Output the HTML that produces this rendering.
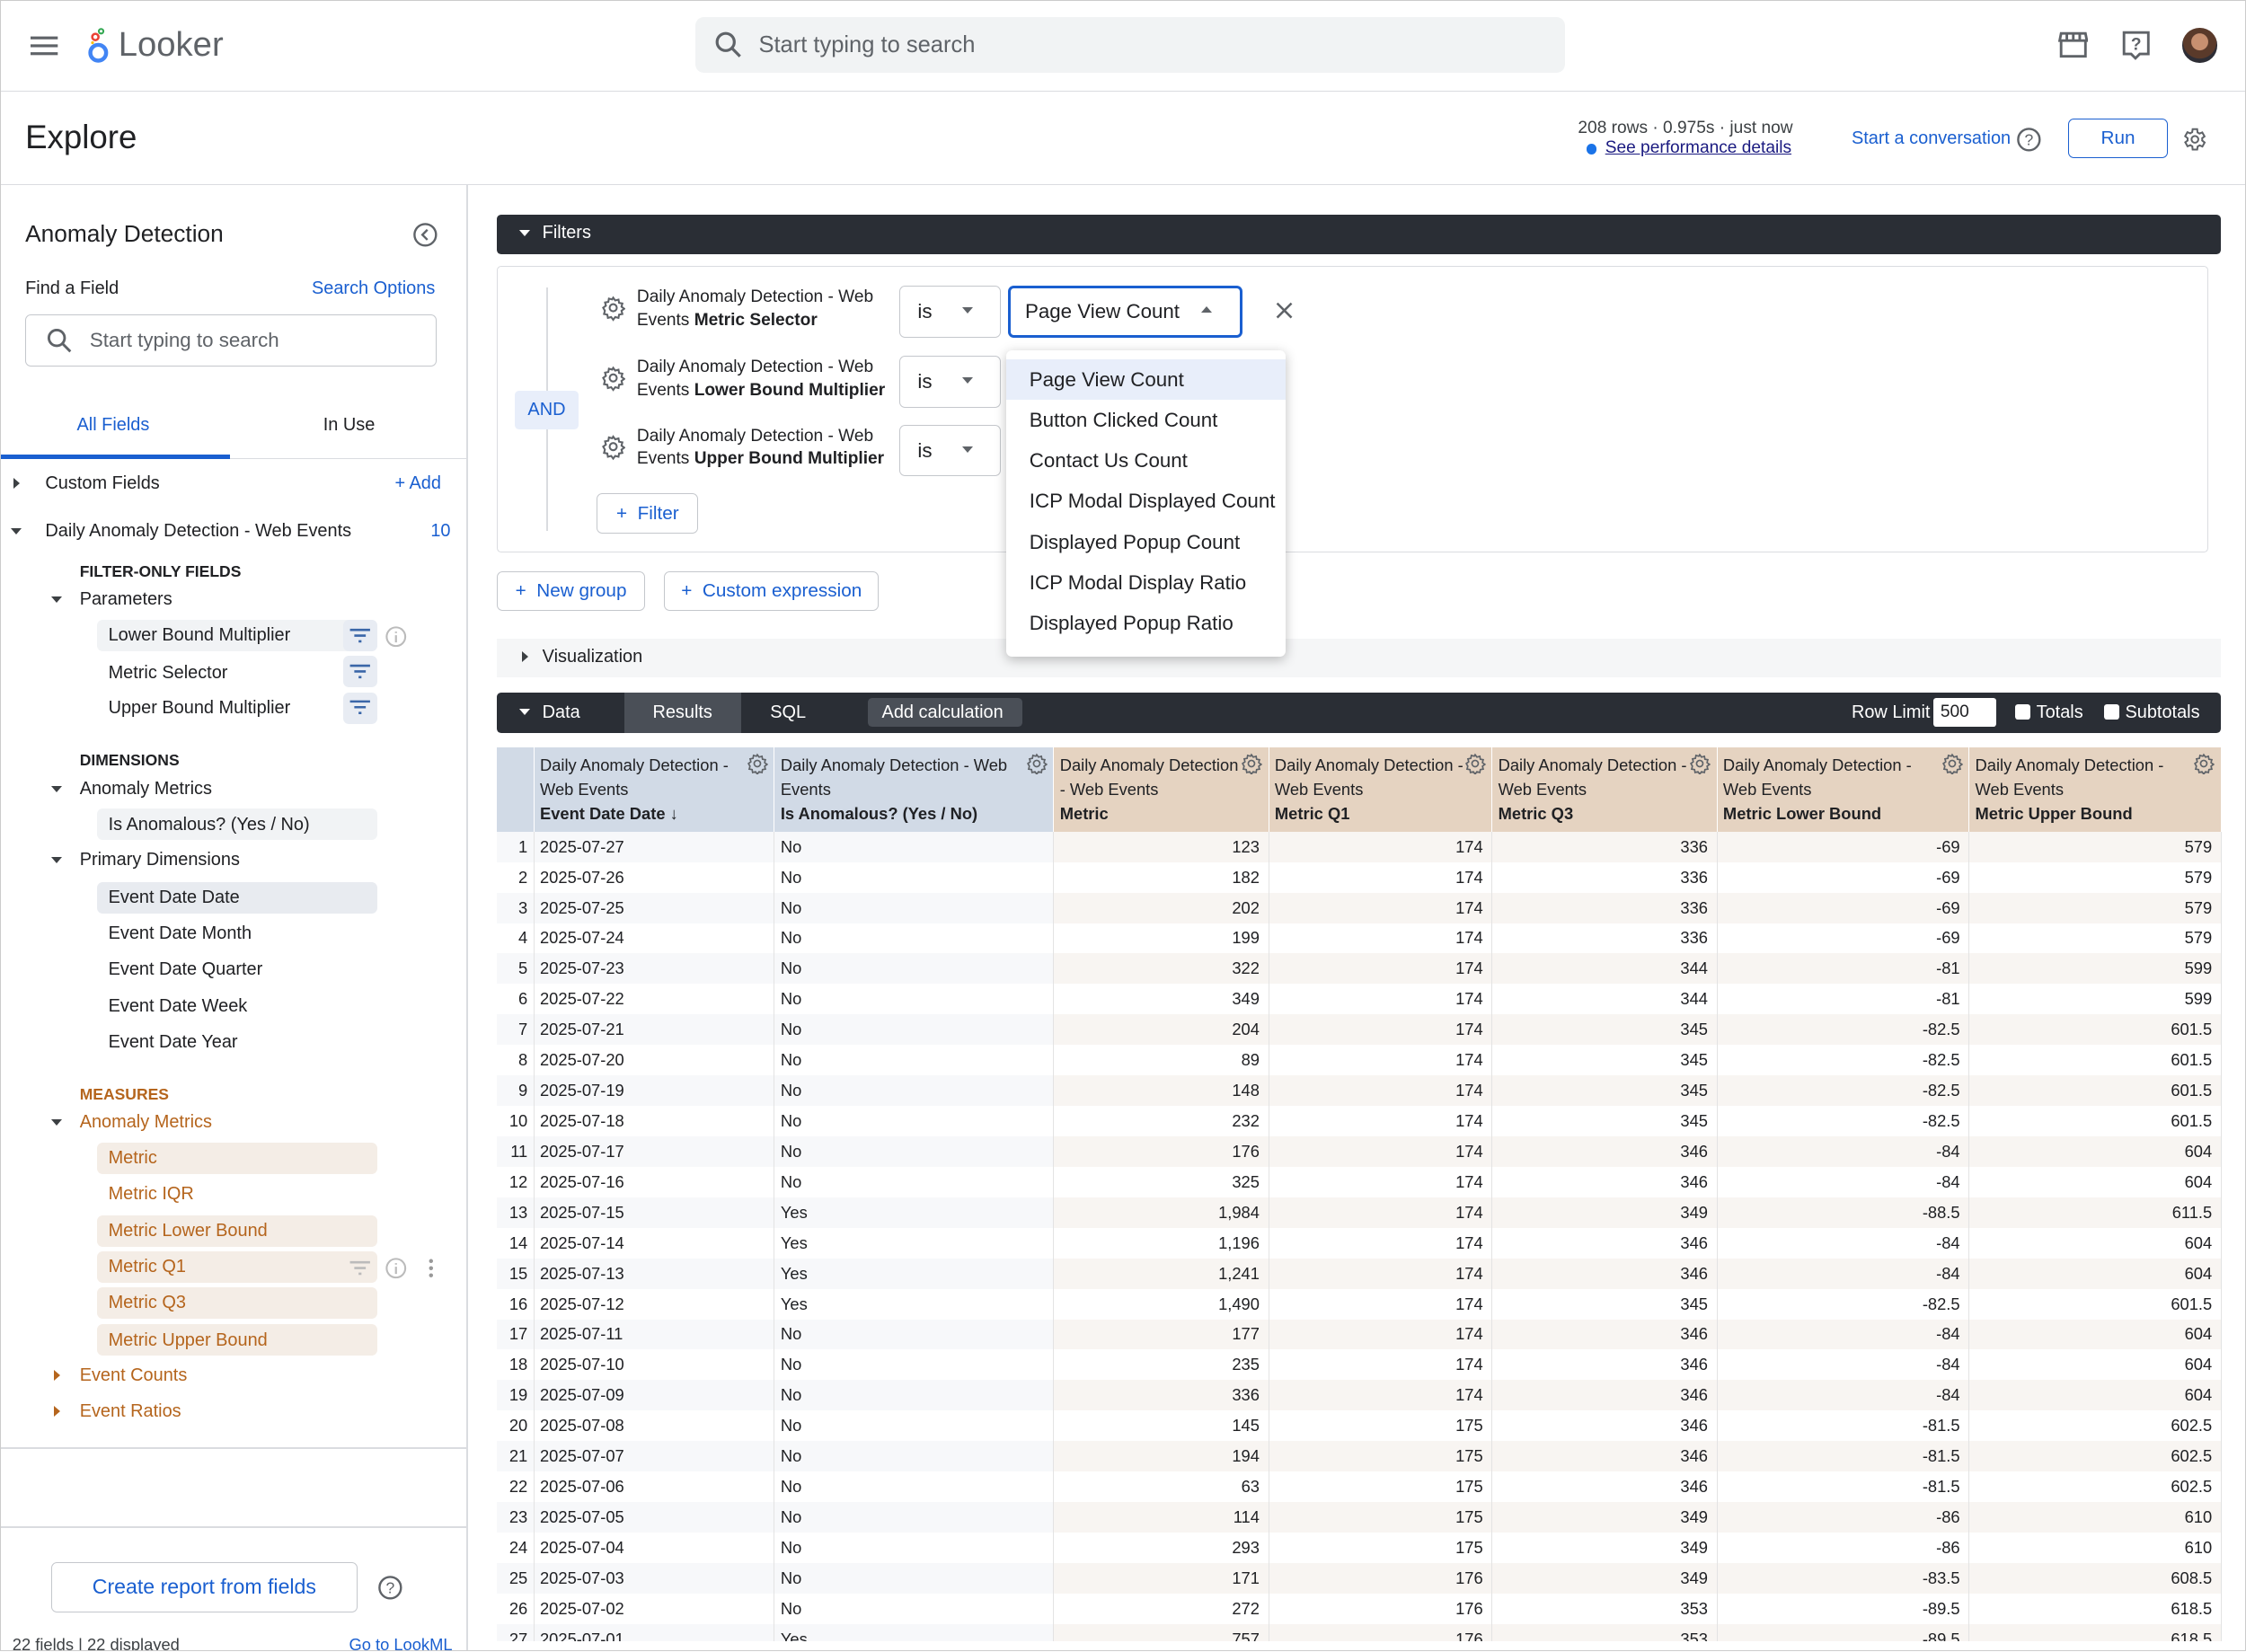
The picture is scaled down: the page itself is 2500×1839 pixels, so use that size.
<!DOCTYPE html>
<html><head><meta charset="utf-8">
<style>
html,body{margin:0;padding:0;background:#fff;overflow:hidden}
#w{zoom:1.5944;width:1568px;height:1153px;position:relative;overflow:hidden;font-family:"Liberation Sans",Arial,sans-serif;color:#202124;border:1px solid #ccc;box-sizing:border-box}
.a{position:absolute;white-space:nowrap}
.blue{color:#1a5fd0}
.sb{font-size:12.5px}
.box{position:absolute;left:67px;width:196px;height:22px;border-radius:4px}
.g{background:#f1f3f5}.b{background:#f4ede6}
.org{color:#b5651d}
.caret{position:absolute;width:0;height:0;border-left:4px solid transparent;border-right:4px solid transparent;border-top:5px solid #3c4043}
.caretr{position:absolute;width:0;height:0;border-top:4px solid transparent;border-bottom:4px solid transparent;border-left:5px solid #3c4043}
.btn{position:absolute;border:1px solid #c4c7cc;border-radius:4px;background:#fff;font-size:13px;color:#1a5fd0;box-sizing:border-box;display:flex;align-items:center;justify-content:center}
table{position:absolute;left:346px;top:521px;border-collapse:collapse;table-layout:fixed;font-size:11.5px}
th{height:56px;text-align:left;vertical-align:top;font-weight:normal;padding:4px 4px;box-sizing:border-box;line-height:17px;font-size:11.5px;position:relative;border-right:1px solid #fff}
th b{font-weight:bold}
th.d{background:#d1dae6}th.m{background:#e5d3c1}
td{height:21.28px;padding:0 4px;box-sizing:border-box;border-right:1px solid #e3e3e3;white-space:nowrap;overflow:hidden}
td.n{text-align:right;padding-right:4px}
td.r{text-align:right;padding-right:6px}
tr:nth-child(even) td.d{background:#f7f8fa}
tr:nth-child(even) td.m{background:#f8f5f2}
.gear{position:absolute;right:4px;top:4px}
.dd div{height:28.4px;line-height:28.4px;padding-left:16px;font-size:14px}
</style></head><body><div id="w">

<!-- top bar -->
<div class="a" style="left:0;top:0;width:1568px;height:63px;border-bottom:1px solid #dadce0"></div>
<svg class="a" style="left:21px;top:24px" width="20" height="15"><rect y="1" width="19" height="2" fill="#5f6368"/><rect y="6.5" width="19" height="2" fill="#5f6368"/><rect y="12" width="19" height="2" fill="#5f6368"/></svg>
<svg class="a" style="left:59px;top:18px" width="20" height="26"><circle cx="9" cy="18" r="5.5" fill="none" stroke="#4285f4" stroke-width="2.8"/><circle cx="7" cy="7" r="2.2" fill="none" stroke="#ea4335" stroke-width="1.6"/><circle cx="11" cy="3" r="1.6" fill="none" stroke="#34a853" stroke-width="1.3"/><circle cx="5" cy="11" r="1" fill="#fbbc04"/></svg>
<div class="a" style="left:82px;top:17px;font-size:24px;color:#5f6368">Looker</div>
<div class="a" style="left:485px;top:11px;width:607px;height:39px;background:#f1f3f4;border-radius:6px"></div>
<svg class="a" style="left:498px;top:21px" width="20" height="20"><circle cx="8" cy="8" r="6" fill="none" stroke="#5f6368" stroke-width="2"/><line x1="12.5" y1="12.5" x2="18" y2="18" stroke="#5f6368" stroke-width="2"/></svg>
<div class="a" style="left:529px;top:22px;font-size:16px;color:#5f6368">Start typing to search</div>
<svg class="a" style="left:1436px;top:21px" width="21" height="20"><path d="M2 2h17l1 5H1z M2 7v11h17V7 M6 2v5 M10.5 2v5 M15 2v5" fill="none" stroke="#5f6368" stroke-width="1.8"/></svg>
<svg class="a" style="left:1480px;top:20px" width="21" height="22"><path d="M2 2h17v15h-6l-3 3-3-3H2z" fill="none" stroke="#5f6368" stroke-width="1.8"/><text x="10.5" y="14" font-size="12" text-anchor="middle" fill="#5f6368" font-family="Liberation Sans" font-weight="bold">?</text></svg>
<div class="a" style="left:1523px;top:19px;width:24px;height:24px;border-radius:50%;background:radial-gradient(circle at 50% 40%,#c89070 0 30%,#5a3a2a 32% 60%,#2d2d35 62%)"></div>

<!-- explore header -->
<div class="a" style="left:0;top:63px;width:1568px;height:65px;border-bottom:1px solid #dadce0"></div>
<div class="a" style="left:17px;top:82px;font-size:23px;color:#202124">Explore</div>
<div class="a" style="left:1101px;top:82px;font-size:12px;color:#3c4043">208 rows · 0.975s · just now</div>
<div class="a" style="left:1107px;top:100px;width:7px;height:7px;border-radius:50%;background:#1a73e8"></div>
<div class="a" style="left:1120px;top:96px;font-size:12px;color:#1a1a80;text-decoration:underline">See performance details</div>
<div class="a blue" style="left:1292px;top:89px;font-size:12.5px">Start a conversation</div>
<svg class="a" style="left:1407px;top:88px" width="18" height="18"><circle cx="9" cy="9" r="7.5" fill="none" stroke="#5f6368" stroke-width="1.5"/><text x="9" y="13" font-size="11" text-anchor="middle" fill="#5f6368" font-family="Liberation Sans">?</text></svg>
<div class="btn" style="left:1443px;top:82px;width:70px;height:28px;border-color:#1a5fd0">Run</div>
<svg class="a" style="left:1522px;top:87px" width="19" height="19" viewBox="0 0 24 24"><path d="M19.4 13a7.5 7.5 0 000-2l2.1-1.6-2-3.5-2.5 1a7 7 0 00-1.7-1L15 3h-4l-.4 2.7a7 7 0 00-1.7 1l-2.5-1-2 3.5L6.6 11a7.5 7.5 0 000 2l-2.1 1.6 2 3.5 2.5-1a7 7 0 001.7 1L11 21h4l.4-2.7a7 7 0 001.7-1l2.5 1 2-3.5z" fill="none" stroke="#5f6368" stroke-width="1.6" transform="translate(-1 0)"/><circle cx="12" cy="12" r="3" fill="none" stroke="#5f6368" stroke-width="1.6"/></svg>

<!-- sidebar -->
<div class="a" style="left:325px;top:128px;width:1px;height:1025px;background:#dadce0"></div>
<div class="a" style="left:17px;top:153px;font-size:16.5px">Anomaly Detection</div>
<svg class="a" style="left:287px;top:154px" width="18" height="18"><circle cx="9" cy="9" r="7.5" fill="none" stroke="#5f6368" stroke-width="1.5"/><path d="M10.5 5.5L7 9l3.5 3.5" fill="none" stroke="#5f6368" stroke-width="1.5"/></svg>
<div class="a sb" style="left:17px;top:194px">Find a Field</div>
<div class="a sb blue" style="left:217px;top:194px">Search Options</div>
<div class="a" style="left:17px;top:219px;width:287px;height:36px;border:1px solid #c4c7cc;border-radius:4px;box-sizing:border-box"></div>
<svg class="a" style="left:32px;top:228px" width="18" height="18"><circle cx="7" cy="7" r="5.5" fill="none" stroke="#5f6368" stroke-width="1.8"/><line x1="11" y1="11" x2="16.5" y2="16.5" stroke="#5f6368" stroke-width="1.8"/></svg>
<div class="a" style="left:62px;top:229px;font-size:14px;color:#5f6368">Start typing to search</div>
<div class="a sb blue" style="left:53px;top:289px">All Fields</div>
<div class="a sb" style="left:225px;top:289px">In Use</div>
<div class="a" style="left:0;top:319px;width:325px;height:1px;background:#dadce0"></div>
<div class="a" style="left:0;top:317px;width:160px;height:3px;background:#1a5fd0"></div>
<div class="caretr" style="left:9px;top:333px"></div>
<div class="a sb" style="left:31px;top:330px">Custom Fields</div>
<div class="a sb blue" style="left:275px;top:330px">+ Add</div>
<div class="caret" style="left:7px;top:368px"></div>
<div class="a sb" style="left:31px;top:363px">Daily Anomaly Detection - Web Events</div>
<div class="a sb blue" style="left:300px;top:363px">10</div>
<div class="a" style="left:55px;top:392px;font-size:11px;font-weight:bold">FILTER-ONLY FIELDS</div>
<div class="caret" style="left:35px;top:416px"></div>
<div class="a sb" style="left:55px;top:411px">Parameters</div>
<div class="box g" style="top:432px"></div>
<div class="a sb" style="left:75px;top:436px">Lower Bound Multiplier</div>
<div class="a sb" style="left:75px;top:462px">Metric Selector</div>
<div class="a sb" style="left:75px;top:487px">Upper Bound Multiplier</div>
<div class="a" style="left:239px;top:432px;width:24px;height:22px;background:#e8ecf3;border-radius:4px"></div>
<div class="a" style="left:239px;top:457px;width:24px;height:22px;background:#e8ecf3;border-radius:4px"></div>
<div class="a" style="left:239px;top:483px;width:24px;height:22px;background:#e8ecf3;border-radius:4px"></div>
<svg class="a" style="left:243px;top:437px" width="16" height="64"><g stroke="#3a66a8" stroke-width="1.6"><path d="M1 2h14M4 6h8M7 10h2"/><path d="M1 27h14M4 31h8M7 35h2"/><path d="M1 52h14M4 56h8M7 60h2"/></g></svg>
<svg class="a" style="left:268px;top:436px" width="16" height="16"><circle cx="8" cy="8" r="6.5" fill="none" stroke="#bbb" stroke-width="1.3"/><path d="M8 7v5M8 4.5v1" stroke="#bbb" stroke-width="1.4"/></svg>
<div class="a" style="left:55px;top:524px;font-size:11px;font-weight:bold">DIMENSIONS</div>
<div class="caret" style="left:35px;top:548px"></div>
<div class="a sb" style="left:55px;top:543px">Anomaly Metrics</div>
<div class="box g" style="top:564px"></div>
<div class="a sb" style="left:75px;top:568px">Is Anomalous? (Yes / No)</div>
<div class="caret" style="left:35px;top:598px"></div>
<div class="a sb" style="left:55px;top:593px">Primary Dimensions</div>
<div class="box g" style="top:615px;background:#e8ebf0"></div>
<div class="a sb" style="left:75px;top:619px">Event Date Date</div>
<div class="a sb" style="left:75px;top:644px">Event Date Month</div>
<div class="a sb" style="left:75px;top:669px">Event Date Quarter</div>
<div class="a sb" style="left:75px;top:695px">Event Date Week</div>
<div class="a sb" style="left:75px;top:720px">Event Date Year</div>
<div class="a org" style="left:55px;top:757px;font-size:11px;font-weight:bold">MEASURES</div>
<div class="caret" style="left:35px;top:781px"></div>
<div class="a sb org" style="left:55px;top:776px">Anomaly Metrics</div>
<div class="box b" style="top:797px"></div>
<div class="box b" style="top:848px"></div>
<div class="box b" style="top:873px"></div>
<div class="box b" style="top:898px"></div>
<div class="box b" style="top:924px"></div>
<div class="a sb org" style="left:75px;top:801px">Metric</div>
<div class="a sb org" style="left:75px;top:826px">Metric IQR</div>
<div class="a sb org" style="left:75px;top:852px">Metric Lower Bound</div>
<div class="a sb org" style="left:75px;top:877px">Metric Q1</div>
<div class="a sb org" style="left:75px;top:902px">Metric Q3</div>
<div class="a sb org" style="left:75px;top:928px">Metric Upper Bound</div>
<svg class="a" style="left:243px;top:879px" width="16" height="12"><path d="M1 2h14M4 6h8M7 10h2" stroke="#bbb" stroke-width="1.6"/></svg>
<svg class="a" style="left:268px;top:877px" width="16" height="16"><circle cx="8" cy="8" r="6.5" fill="none" stroke="#bbb" stroke-width="1.3"/><path d="M8 7v5M8 4.5v1" stroke="#bbb" stroke-width="1.4"/></svg>
<svg class="a" style="left:297px;top:877px" width="6" height="16"><circle cx="3" cy="3" r="1.4" fill="#999"/><circle cx="3" cy="8" r="1.4" fill="#999"/><circle cx="3" cy="13" r="1.4" fill="#999"/></svg>
<div class="caretr" style="left:37px;top:956px;border-left-color:#b5651d"></div>
<div class="a sb org" style="left:55px;top:953px">Event Counts</div>
<div class="caretr" style="left:37px;top:981px;border-left-color:#b5651d"></div>
<div class="a sb org" style="left:55px;top:978px">Event Ratios</div>
<div class="a" style="left:0;top:1010px;width:325px;height:1px;background:#dadce0"></div>
<div class="a" style="left:0;top:1065px;width:325px;height:1px;background:#dadce0"></div>
<div class="btn" style="left:35px;top:1090px;width:214px;height:35px;font-size:14.5px">Create report from fields</div>
<svg class="a" style="left:263px;top:1099px" width="18" height="18"><circle cx="9" cy="9" r="7.5" fill="none" stroke="#5f6368" stroke-width="1.5"/><text x="9" y="13" font-size="11" text-anchor="middle" fill="#5f6368" font-family="Liberation Sans">?</text></svg>
<div class="a" style="left:8px;top:1141px;font-size:11.5px;color:#3c4043">22 fields | 22 displayed</div>
<div class="a blue" style="left:243px;top:1141px;font-size:11.5px">Go to LookML</div>

<!-- filters -->
<div class="a" style="left:346px;top:149px;width:1204px;height:28px;background:#2a2e35;border-radius:3px"></div>
<div class="caret" style="left:362px;top:160px;border-top-color:#fff"></div>
<div class="a" style="left:378px;top:155px;font-size:12.5px;color:#fff">Filters</div>
<div class="a" style="left:346px;top:185px;width:1195px;height:200px;border:1px solid #dadce0;border-radius:3px;box-sizing:border-box"></div>
<div class="a" style="left:381px;top:200px;width:1px;height:170px;background:#dadce0"></div>
<div class="a" style="left:359px;top:272px;width:44px;height:27px;background:#e8eefa;border-radius:3px;color:#1a5fd0;font-size:12.5px;text-align:center;line-height:27px">AND</div>
<svg class="a" style="left:419px;top:206px" width="17" height="115" viewBox="0 0 17 115"><g fill="none" stroke="#5f6368" stroke-width="1.3"><g id="gg"><circle cx="8.5" cy="8.5" r="2.5"/><path d="M8.5 1.5l1.4 1.9 2.3-.6.4 2.3 2.3.4-.6 2.3 1.9 1.4-1.9 1.4.6 2.3-2.3.4-.4 2.3-2.3-.6-1.4 1.9-1.4-1.9-2.3.6-.4-2.3-2.3-.4.6-2.3L1.5 8.5l1.9-1.4-.6-2.3 2.3-.4.4-2.3 2.3.6z"/></g><g transform="translate(0 49)"><circle cx="8.5" cy="8.5" r="2.5"/><path d="M8.5 1.5l1.4 1.9 2.3-.6.4 2.3 2.3.4-.6 2.3 1.9 1.4-1.9 1.4.6 2.3-2.3.4-.4 2.3-2.3-.6-1.4 1.9-1.4-1.9-2.3.6-.4-2.3-2.3-.4.6-2.3L1.5 8.5l1.9-1.4-.6-2.3 2.3-.4.4-2.3 2.3.6z"/></g><g transform="translate(0 97)"><circle cx="8.5" cy="8.5" r="2.5"/><path d="M8.5 1.5l1.4 1.9 2.3-.6.4 2.3 2.3.4-.6 2.3 1.9 1.4-1.9 1.4.6 2.3-2.3.4-.4 2.3-2.3-.6-1.4 1.9-1.4-1.9-2.3.6-.4-2.3-2.3-.4.6-2.3L1.5 8.5l1.9-1.4-.6-2.3 2.3-.4.4-2.3 2.3.6z"/></g></g></svg>
<div class="a" style="left:444px;top:199px;font-size:12px;line-height:16px">Daily Anomaly Detection - Web<br>Events <b>Metric Selector</b></div>
<div class="a" style="left:444px;top:248px;font-size:12px;line-height:16px">Daily Anomaly Detection - Web<br>Events <b>Lower Bound Multiplier</b></div>
<div class="a" style="left:444px;top:296px;font-size:12px;line-height:16px">Daily Anomaly Detection - Web<br>Events <b>Upper Bound Multiplier</b></div>
<div class="a" style="left:627px;top:199px;width:71px;height:36px;border:1px solid #c4c7cc;border-radius:4px;box-sizing:border-box"></div>
<div class="a" style="left:627px;top:248px;width:71px;height:36px;border:1px solid #c4c7cc;border-radius:4px;box-sizing:border-box"></div>
<div class="a" style="left:627px;top:296px;width:71px;height:36px;border:1px solid #c4c7cc;border-radius:4px;box-sizing:border-box"></div>
<div class="a" style="left:640px;top:209px;font-size:14px">is</div>
<div class="a" style="left:640px;top:258px;font-size:14px">is</div>
<div class="a" style="left:640px;top:306px;font-size:14px">is</div>
<div class="caret" style="left:671px;top:214px;border-top-color:#5f6368"></div>
<div class="caret" style="left:671px;top:263px;border-top-color:#5f6368"></div>
<div class="caret" style="left:671px;top:311px;border-top-color:#5f6368"></div>
<div class="a" style="left:703px;top:199px;width:164px;height:36px;border:2px solid #1a5fd0;border-radius:4px;box-sizing:border-box"></div>
<div class="a" style="left:715px;top:209px;font-size:14px">Page View Count</div>
<div class="a" style="left:838px;top:213px;width:0;height:0;border-left:4px solid transparent;border-right:4px solid transparent;border-bottom:5px solid #5f6368"></div>
<svg class="a" style="left:890px;top:210px" width="12" height="12"><path d="M1 1l10 10M11 1L1 11" stroke="#5f6368" stroke-width="1.6"/></svg>
<div class="btn" style="left:416px;top:344px;width:71px;height:28px">+&nbsp; Filter</div>
<div class="btn" style="left:346px;top:398px;width:104px;height:28px">+&nbsp; New group</div>
<div class="btn" style="left:463px;top:398px;width:150px;height:28px">+&nbsp; Custom expression</div>
<div class="a" style="left:346px;top:445px;width:1204px;height:27px;background:#f5f6f7"></div>
<div class="caretr" style="left:364px;top:454px"></div>
<div class="a" style="left:378px;top:451px;font-size:12.5px">Visualization</div>

<!-- data bar -->
<div class="a" style="left:346px;top:483px;width:1204px;height:28px;background:#2a2e35;border-radius:3px"></div>
<div class="caret" style="left:362px;top:494px;border-top-color:#fff"></div>
<div class="a" style="left:378px;top:490px;font-size:12.5px;color:#fff">Data</div>
<div class="a" style="left:435px;top:483px;width:82px;height:28px;background:#4a4f57"></div>
<div class="a" style="left:455px;top:490px;font-size:12.5px;color:#fff">Results</div>
<div class="a" style="left:537px;top:490px;font-size:12.5px;color:#fff">SQL</div>
<div class="a" style="left:605px;top:487px;width:108px;height:20px;background:#4a4f57;border-radius:3px"></div>
<div class="a" style="left:615px;top:490px;font-size:12.5px;color:#fff">Add calculation</div>
<div class="a" style="left:1292px;top:490px;font-size:12.5px;color:#fff">Row Limit</div>
<div class="a" style="left:1349px;top:487px;width:44px;height:20px;background:#fff;border-radius:2px;font-size:12px;line-height:20px;padding-left:5px;box-sizing:border-box">500</div>
<div class="a" style="left:1406px;top:491px;width:11px;height:11px;background:#fff;border-radius:2px"></div>
<div class="a" style="left:1421px;top:490px;font-size:12.5px;color:#fff">Totals</div>
<div class="a" style="left:1468px;top:491px;width:11px;height:11px;background:#fff;border-radius:2px"></div>
<div class="a" style="left:1483px;top:490px;font-size:12.5px;color:#fff">Subtotals</div>

<!-- table -->
<table>
<colgroup><col style="width:26px"><col style="width:168px"><col style="width:195px"><col style="width:150px"><col style="width:156px"><col style="width:157px"><col style="width:176px"><col style="width:176px"></colgroup>
<tr><th class="d"></th>
<th class="d">Daily Anomaly Detection -<br>Web Events<br><b>Event Date Date ↓</b><svg class="gear" width="15" height="15" viewBox="0 0 17 17"><g fill="none" stroke="#5f6368" stroke-width="1.2"><circle cx="8.5" cy="8.5" r="2.5"/><path d="M8.5 1.5l1.4 1.9 2.3-.6.4 2.3 2.3.4-.6 2.3 1.9 1.4-1.9 1.4.6 2.3-2.3.4-.4 2.3-2.3-.6-1.4 1.9-1.4-1.9-2.3.6-.4-2.3-2.3-.4.6-2.3L1.5 8.5l1.9-1.4-.6-2.3 2.3-.4.4-2.3 2.3.6z"/></g></svg></th>
<th class="d">Daily Anomaly Detection - Web<br>Events<br><b>Is Anomalous? (Yes / No)</b><svg class="gear" width="15" height="15" viewBox="0 0 17 17"><g fill="none" stroke="#5f6368" stroke-width="1.2"><circle cx="8.5" cy="8.5" r="2.5"/><path d="M8.5 1.5l1.4 1.9 2.3-.6.4 2.3 2.3.4-.6 2.3 1.9 1.4-1.9 1.4.6 2.3-2.3.4-.4 2.3-2.3-.6-1.4 1.9-1.4-1.9-2.3.6-.4-2.3-2.3-.4.6-2.3L1.5 8.5l1.9-1.4-.6-2.3 2.3-.4.4-2.3 2.3.6z"/></g></svg></th>
<th class="m">Daily Anomaly Detection<br>- Web Events<br><b>Metric</b><svg class="gear" width="15" height="15" viewBox="0 0 17 17"><g fill="none" stroke="#5f6368" stroke-width="1.2"><circle cx="8.5" cy="8.5" r="2.5"/><path d="M8.5 1.5l1.4 1.9 2.3-.6.4 2.3 2.3.4-.6 2.3 1.9 1.4-1.9 1.4.6 2.3-2.3.4-.4 2.3-2.3-.6-1.4 1.9-1.4-1.9-2.3.6-.4-2.3-2.3-.4.6-2.3L1.5 8.5l1.9-1.4-.6-2.3 2.3-.4.4-2.3 2.3.6z"/></g></svg></th>
<th class="m">Daily Anomaly Detection -<br>Web Events<br><b>Metric Q1</b><svg class="gear" width="15" height="15" viewBox="0 0 17 17"><g fill="none" stroke="#5f6368" stroke-width="1.2"><circle cx="8.5" cy="8.5" r="2.5"/><path d="M8.5 1.5l1.4 1.9 2.3-.6.4 2.3 2.3.4-.6 2.3 1.9 1.4-1.9 1.4.6 2.3-2.3.4-.4 2.3-2.3-.6-1.4 1.9-1.4-1.9-2.3.6-.4-2.3-2.3-.4.6-2.3L1.5 8.5l1.9-1.4-.6-2.3 2.3-.4.4-2.3 2.3.6z"/></g></svg></th>
<th class="m">Daily Anomaly Detection -<br>Web Events<br><b>Metric Q3</b><svg class="gear" width="15" height="15" viewBox="0 0 17 17"><g fill="none" stroke="#5f6368" stroke-width="1.2"><circle cx="8.5" cy="8.5" r="2.5"/><path d="M8.5 1.5l1.4 1.9 2.3-.6.4 2.3 2.3.4-.6 2.3 1.9 1.4-1.9 1.4.6 2.3-2.3.4-.4 2.3-2.3-.6-1.4 1.9-1.4-1.9-2.3.6-.4-2.3-2.3-.4.6-2.3L1.5 8.5l1.9-1.4-.6-2.3 2.3-.4.4-2.3 2.3.6z"/></g></svg></th>
<th class="m">Daily Anomaly Detection -<br>Web Events<br><b>Metric Lower Bound</b><svg class="gear" width="15" height="15" viewBox="0 0 17 17"><g fill="none" stroke="#5f6368" stroke-width="1.2"><circle cx="8.5" cy="8.5" r="2.5"/><path d="M8.5 1.5l1.4 1.9 2.3-.6.4 2.3 2.3.4-.6 2.3 1.9 1.4-1.9 1.4.6 2.3-2.3.4-.4 2.3-2.3-.6-1.4 1.9-1.4-1.9-2.3.6-.4-2.3-2.3-.4.6-2.3L1.5 8.5l1.9-1.4-.6-2.3 2.3-.4.4-2.3 2.3.6z"/></g></svg></th>
<th class="m">Daily Anomaly Detection -<br>Web Events<br><b>Metric Upper Bound</b><svg class="gear" width="15" height="15" viewBox="0 0 17 17"><g fill="none" stroke="#5f6368" stroke-width="1.2"><circle cx="8.5" cy="8.5" r="2.5"/><path d="M8.5 1.5l1.4 1.9 2.3-.6.4 2.3 2.3.4-.6 2.3 1.9 1.4-1.9 1.4.6 2.3-2.3.4-.4 2.3-2.3-.6-1.4 1.9-1.4-1.9-2.3.6-.4-2.3-2.3-.4.6-2.3L1.5 8.5l1.9-1.4-.6-2.3 2.3-.4.4-2.3 2.3.6z"/></g></svg></th></tr>
<tr><td class="d n">1</td><td class="d">2025-07-27</td><td class="d">No</td><td class="m r">123</td><td class="m r">174</td><td class="m r">336</td><td class="m r">-69</td><td class="m r">579</td></tr>
<tr><td class="d n">2</td><td class="d">2025-07-26</td><td class="d">No</td><td class="m r">182</td><td class="m r">174</td><td class="m r">336</td><td class="m r">-69</td><td class="m r">579</td></tr>
<tr><td class="d n">3</td><td class="d">2025-07-25</td><td class="d">No</td><td class="m r">202</td><td class="m r">174</td><td class="m r">336</td><td class="m r">-69</td><td class="m r">579</td></tr>
<tr><td class="d n">4</td><td class="d">2025-07-24</td><td class="d">No</td><td class="m r">199</td><td class="m r">174</td><td class="m r">336</td><td class="m r">-69</td><td class="m r">579</td></tr>
<tr><td class="d n">5</td><td class="d">2025-07-23</td><td class="d">No</td><td class="m r">322</td><td class="m r">174</td><td class="m r">344</td><td class="m r">-81</td><td class="m r">599</td></tr>
<tr><td class="d n">6</td><td class="d">2025-07-22</td><td class="d">No</td><td class="m r">349</td><td class="m r">174</td><td class="m r">344</td><td class="m r">-81</td><td class="m r">599</td></tr>
<tr><td class="d n">7</td><td class="d">2025-07-21</td><td class="d">No</td><td class="m r">204</td><td class="m r">174</td><td class="m r">345</td><td class="m r">-82.5</td><td class="m r">601.5</td></tr>
<tr><td class="d n">8</td><td class="d">2025-07-20</td><td class="d">No</td><td class="m r">89</td><td class="m r">174</td><td class="m r">345</td><td class="m r">-82.5</td><td class="m r">601.5</td></tr>
<tr><td class="d n">9</td><td class="d">2025-07-19</td><td class="d">No</td><td class="m r">148</td><td class="m r">174</td><td class="m r">345</td><td class="m r">-82.5</td><td class="m r">601.5</td></tr>
<tr><td class="d n">10</td><td class="d">2025-07-18</td><td class="d">No</td><td class="m r">232</td><td class="m r">174</td><td class="m r">345</td><td class="m r">-82.5</td><td class="m r">601.5</td></tr>
<tr><td class="d n">11</td><td class="d">2025-07-17</td><td class="d">No</td><td class="m r">176</td><td class="m r">174</td><td class="m r">346</td><td class="m r">-84</td><td class="m r">604</td></tr>
<tr><td class="d n">12</td><td class="d">2025-07-16</td><td class="d">No</td><td class="m r">325</td><td class="m r">174</td><td class="m r">346</td><td class="m r">-84</td><td class="m r">604</td></tr>
<tr><td class="d n">13</td><td class="d">2025-07-15</td><td class="d">Yes</td><td class="m r">1,984</td><td class="m r">174</td><td class="m r">349</td><td class="m r">-88.5</td><td class="m r">611.5</td></tr>
<tr><td class="d n">14</td><td class="d">2025-07-14</td><td class="d">Yes</td><td class="m r">1,196</td><td class="m r">174</td><td class="m r">346</td><td class="m r">-84</td><td class="m r">604</td></tr>
<tr><td class="d n">15</td><td class="d">2025-07-13</td><td class="d">Yes</td><td class="m r">1,241</td><td class="m r">174</td><td class="m r">346</td><td class="m r">-84</td><td class="m r">604</td></tr>
<tr><td class="d n">16</td><td class="d">2025-07-12</td><td class="d">Yes</td><td class="m r">1,490</td><td class="m r">174</td><td class="m r">345</td><td class="m r">-82.5</td><td class="m r">601.5</td></tr>
<tr><td class="d n">17</td><td class="d">2025-07-11</td><td class="d">No</td><td class="m r">177</td><td class="m r">174</td><td class="m r">346</td><td class="m r">-84</td><td class="m r">604</td></tr>
<tr><td class="d n">18</td><td class="d">2025-07-10</td><td class="d">No</td><td class="m r">235</td><td class="m r">174</td><td class="m r">346</td><td class="m r">-84</td><td class="m r">604</td></tr>
<tr><td class="d n">19</td><td class="d">2025-07-09</td><td class="d">No</td><td class="m r">336</td><td class="m r">174</td><td class="m r">346</td><td class="m r">-84</td><td class="m r">604</td></tr>
<tr><td class="d n">20</td><td class="d">2025-07-08</td><td class="d">No</td><td class="m r">145</td><td class="m r">175</td><td class="m r">346</td><td class="m r">-81.5</td><td class="m r">602.5</td></tr>
<tr><td class="d n">21</td><td class="d">2025-07-07</td><td class="d">No</td><td class="m r">194</td><td class="m r">175</td><td class="m r">346</td><td class="m r">-81.5</td><td class="m r">602.5</td></tr>
<tr><td class="d n">22</td><td class="d">2025-07-06</td><td class="d">No</td><td class="m r">63</td><td class="m r">175</td><td class="m r">346</td><td class="m r">-81.5</td><td class="m r">602.5</td></tr>
<tr><td class="d n">23</td><td class="d">2025-07-05</td><td class="d">No</td><td class="m r">114</td><td class="m r">175</td><td class="m r">349</td><td class="m r">-86</td><td class="m r">610</td></tr>
<tr><td class="d n">24</td><td class="d">2025-07-04</td><td class="d">No</td><td class="m r">293</td><td class="m r">175</td><td class="m r">349</td><td class="m r">-86</td><td class="m r">610</td></tr>
<tr><td class="d n">25</td><td class="d">2025-07-03</td><td class="d">No</td><td class="m r">171</td><td class="m r">176</td><td class="m r">349</td><td class="m r">-83.5</td><td class="m r">608.5</td></tr>
<tr><td class="d n">26</td><td class="d">2025-07-02</td><td class="d">No</td><td class="m r">272</td><td class="m r">176</td><td class="m r">353</td><td class="m r">-89.5</td><td class="m r">618.5</td></tr>
<tr><td class="d n">27</td><td class="d">2025-07-01</td><td class="d">Yes</td><td class="m r">757</td><td class="m r">176</td><td class="m r">353</td><td class="m r">-89.5</td><td class="m r">618.5</td></tr>
</table>
<div class="a" style="left:326px;top:1145px;width:1242px;height:8px;background:#fff"></div>

<!-- dropdown -->
<div class="a dd" style="left:702px;top:244px;width:195px;height:214px;background:#fff;border-radius:4px;box-shadow:0 2px 8px rgba(0,0,0,.25);padding-top:6px;box-sizing:border-box">
<div style="background:#e8eefa">Page View Count</div>
<div>Button Clicked Count</div>
<div>Contact Us Count</div>
<div>ICP Modal Displayed Count</div>
<div>Displayed Popup Count</div>
<div>ICP Modal Display Ratio</div>
<div>Displayed Popup Ratio</div>
</div>

</div></body></html>
